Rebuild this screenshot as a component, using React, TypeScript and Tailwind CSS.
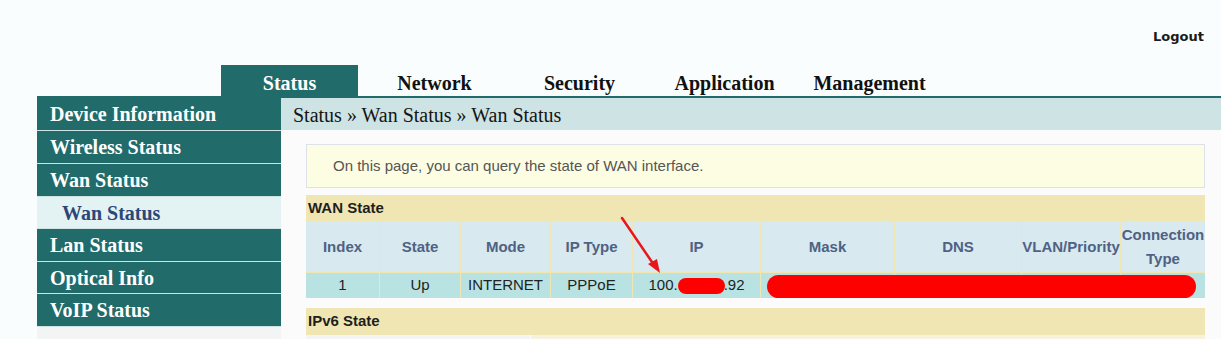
const tabs = ["Status", "Network", "Security", "Application", "Management"];

const menu: { label: string; sub?: boolean; h: string }[] = [
  { label: "Device Information", h: "h-[35px] pt-[2px]" },
  { label: "Wireless Status", h: "h-[33px]" },
  { label: "Wan Status", h: "h-[33px]" },
  { label: "Wan Status", sub: true, h: "h-[32px]" },
  { label: "Lan Status", h: "h-[33px]" },
  { label: "Optical Info", h: "h-[32px]" },
  { label: "VoIP Status", h: "h-[33px]" },
];

const headers = ["Index", "State", "Mode", "IP Type", "IP", "Mask", "DNS", "VLAN/Priority", "Connection Type"];

const serif = "font-['Liberation_Serif',serif]";
const sans = "font-['Liberation_Sans',Arial,sans-serif]";

export default function App() {
  return (
    <div className="w-[1221px] h-[339px] overflow-hidden bg-[#f9fdfd]">
      {/* logout */}
      <div className="h-[65px] flex justify-end pr-[17px] pt-[28px]">
        <span className="font-['DejaVu_Sans',sans-serif] text-[13px] font-bold text-[#1b1b1b] leading-[18px]">
          Logout
        </span>
      </div>

      {/* top tabs */}
      <div className={`h-[31px] flex pl-[221px] gap-[8px] ${serif}`}>
        {tabs.map((t, i) => (
          <div
            key={t}
            className={`w-[137px] flex items-end justify-center pb-[1px] text-[20px] font-bold leading-[24px] ${
              i === 0 ? "bg-[#216c6b] text-white" : "text-[#111]"
            }`}
          >
            {t}
          </div>
        ))}
      </div>

      <div className="flex pl-[37px]">
        {/* sidebar */}
        <div className={`w-[244px] h-[243px] bg-[#f3f4f4] ${serif}`}>
          {menu.map((m, i) => (
            <div
              key={i}
              className={`flex items-center border-b border-[#cfe2e2] text-[20px] font-bold ${m.h} ${
                m.sub ? "bg-[#e3f2f3] text-[#2c4677] pl-[25px]" : "bg-[#216c6b] text-white pl-[13px]"
              }`}
            >
              {m.label}
            </div>
          ))}
        </div>

        {/* main */}
        <div className="flex-1 h-[243px] border-t-2 border-[#216c6b] bg-[#fcfbfb]">
          <div className={`h-[32px] bg-[#cde3e4] flex items-center pl-[12px] pt-px text-[20px] text-[#151515] ${serif}`}>
            Status » Wan Status » Wan Status
          </div>

          <div className={`relative pl-[25px] pr-[16px] pt-[14px] ${sans}`}>
            <div className="h-[44px] bg-[#fdfde3] border border-[#dde2ea] flex items-center pl-[26px] text-[15px] text-[#555]">
              On this page, you can query the state of WAN interface.
            </div>

            <div className="mt-[7px] bg-[#f0e6b4]">
              <div className="h-[26px] flex items-center pl-[2px] text-[15px] font-bold text-[#1e1e1e]">
                WAN State
              </div>
              <div className="grid grid-cols-[73px_80px_89px_81px_127px_133px_126px_98px_1fr] gap-px text-[15px]">
                {headers.map((h) => (
                  <div
                    key={h}
                    className="h-[51px] bg-[#d8e9f0] flex items-center justify-center text-center font-bold text-[#4f6283] leading-[24px]"
                  >
                    {h}
                  </div>
                ))}
                {["1", "Up", "INTERNET", "PPPoE"].map((v) => (
                  <div key={v} className="h-[25px] bg-[#b9e2e3] flex items-center justify-center text-[#222]">
                    {v}
                  </div>
                ))}
                <div className="h-[25px] bg-[#b9e2e3] flex items-center justify-center text-[#222]">
                  <span>100.</span>
                  <span className="inline-block w-[47px] h-[16px] mr-[-1px] rounded-full bg-[#ff0000]" />
                  <span>.92</span>
                </div>
                {[0, 1, 2, 3].map((k) => (
                  <div key={k} className="h-[25px] bg-[#b9e2e3]" />
                ))}
              </div>
            </div>

            {/* redaction over mask/dns/vlan/type */}
            <div className="absolute left-[486px] top-[145px] w-[429px] h-[23px] rounded-full bg-[#ff0000]" />

            {/* red arrow */}
            <svg className="absolute left-[335px] top-[85px]" width="50" height="65" viewBox="0 0 50 65">
              <line x1="6" y1="3" x2="38" y2="50" stroke="#e8171b" strokeWidth="2.5" strokeLinecap="round" />
              <polygon points="44,58 32,49 41,44" fill="#e8171b" />
            </svg>

            <div className="mt-[10px] h-[27px] bg-[#f0e6b4] flex items-center pl-[2px] text-[15px] font-bold text-[#1e1e1e]">
              IPv6 State
            </div>
            <div className="h-[6px] flex gap-px">
              <div className="w-[224px] bg-[#f3f4f6]" />
              <div className="flex-1 bg-[#f0e6b4]/40" />
            </div>
          </div>
        </div>
      </div>
    </div>
  );
}
